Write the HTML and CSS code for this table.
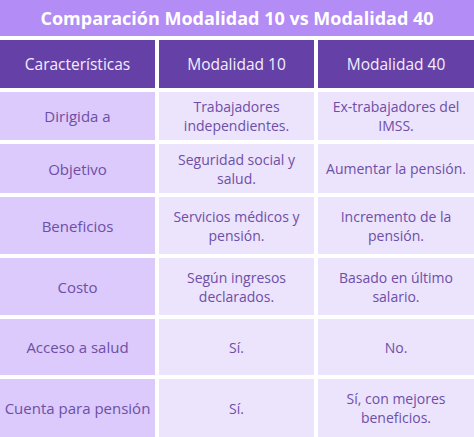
FILE: index.html
```html
<!DOCTYPE html>
<html lang="es">
<head>
<meta charset="utf-8">
<link rel="stylesheet" href="styles.css">
</head>
<body>
<div class="title">Comparación Modalidad 10 vs Modalidad 40</div>
<div class="table">
  <div class="th">Características</div>
  <div class="th">Modalidad 10</div>
  <div class="th">Modalidad 40</div>

  <div class="rh">Dirigida a</div>
  <div class="td">Trabajadores<br>independientes.</div>
  <div class="td">Ex-trabajadores del<br>IMSS.</div>

  <div class="rh">Objetivo</div>
  <div class="td">Seguridad social y<br>salud.</div>
  <div class="td">Aumentar la pensión.</div>

  <div class="rh">Beneficios</div>
  <div class="td">Servicios médicos y<br>pensión.</div>
  <div class="td">Incremento de la<br>pensión.</div>

  <div class="rh">Costo</div>
  <div class="td">Según ingresos<br>declarados.</div>
  <div class="td">Basado en último<br>salario.</div>

  <div class="rh">Acceso a salud</div>
  <div class="td">Sí.</div>
  <div class="td">No.</div>

  <div class="rh">Cuenta para pensión</div>
  <div class="td">Sí.</div>
  <div class="td">Sí, con mejores<br>beneficios.</div>
</div>
</body>
</html>
```
FILE: styles.css
```css
html, body {
  margin: 0;
  padding: 0;
  background: #ffffff;
}
body {
  width: 474px;
  height: 437px;
  overflow: hidden;
  font-family: "Open Sans", "Liberation Sans", sans-serif;
}
.title {
  height: 36px;
  margin-bottom: 4px;
  background: #b38cf6;
  color: #ffffff;
  font-weight: 700;
  font-size: 18px;
  display: flex;
  align-items: center;
  justify-content: center;
}
.table {
  display: grid;
  grid-template-columns: 155px 155px 156px;
  grid-template-rows: 48px 48px 49px 57px 57px 56px 58px;
  gap: 4px;
}
.th, .rh, .td {
  display: flex;
  align-items: center;
  justify-content: center;
  text-align: center;
}
.th {
  background: #6541a7;
  color: #f3eefc;
  font-size: 15.5px;
}
.rh {
  background: #dbcafb;
  color: #6e4fa6;
  font-size: 15px;
}
.td {
  background: #ece3fd;
  color: #6e4fa6;
  font-size: 14px;
  line-height: 19px;
}
```
